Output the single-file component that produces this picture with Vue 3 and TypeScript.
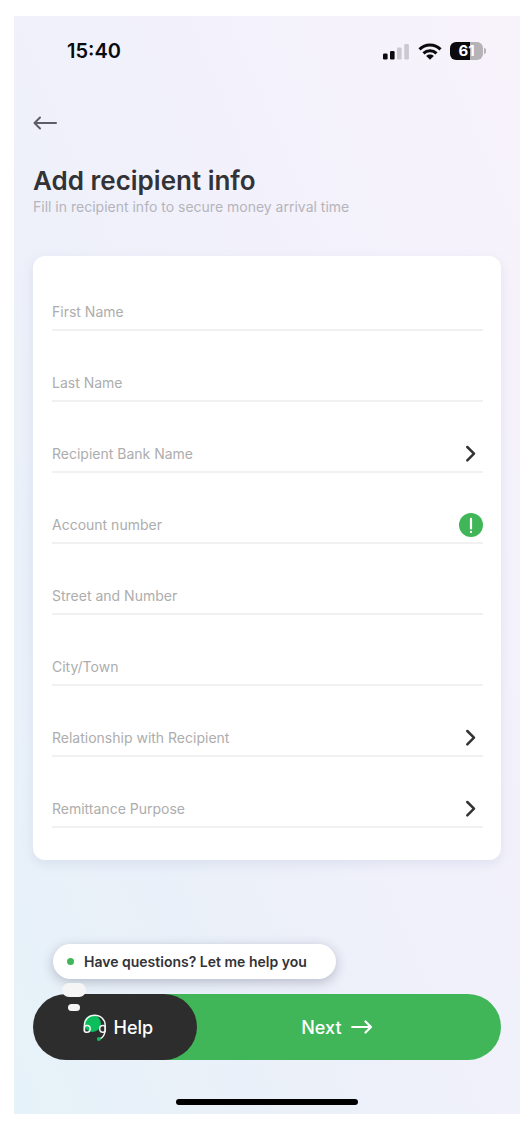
<script setup lang="ts">
import { reactive } from 'vue'

interface Field {
  id: string
  label: string
  kind: 'text' | 'select'
  info?: boolean
}

const fields: Field[] = [
  { id: 'firstName', label: 'First Name', kind: 'text' },
  { id: 'lastName', label: 'Last Name', kind: 'text' },
  { id: 'bank', label: 'Recipient Bank Name', kind: 'select' },
  { id: 'account', label: 'Account number', kind: 'text', info: true },
  { id: 'street', label: 'Street and Number', kind: 'text' },
  { id: 'city', label: 'City/Town', kind: 'text' },
  { id: 'relationship', label: 'Relationship with Recipient', kind: 'select' },
  { id: 'purpose', label: 'Remittance Purpose', kind: 'select' },
]

const values = reactive<Record<string, string>>(
  Object.fromEntries(fields.map((f) => [f.id, ''])),
)
</script>

<template>
  <main class="screen">
    <div class="status">
      <span class="time">15:40</span>
      <div class="status-icons">
        <svg class="signal" viewBox="0 0 27 17" aria-hidden="true">
          <rect x="0" y="10.500" width="4.600" height="6" rx="1.300" fill="#0b0a0d" />
          <rect x="7" y="8" width="4.600" height="8.500" rx="1.300" fill="#0b0a0d" />
          <rect x="14" y="4.500" width="4.600" height="12" rx="1.300" fill="#ccc8d0" />
          <rect x="21.300" y="1" width="4.600" height="15.500" rx="1.300" fill="#ccc8d0" />
        </svg>
        <svg class="wifi" viewBox="0 0 24 17" aria-hidden="true">
          <g fill="none" stroke="#0b0a0d" stroke-width="3">
            <path d="M1.500 6.400C7.300.5 16.700.5 22.500 6.400" />
            <path d="M5.500 10.300c3.600-3.500 9.400-3.500 13 0" />
          </g>
          <path d="M8.200 12.900c2.200-1.900 5.400-1.900 7.600 0L12 16.700z" fill="#0b0a0d" />
        </svg>
        <div class="battery">
          <span class="cell">61</span>
          <span class="cap"></span>
        </div>
      </div>
    </div>

    <button class="back" type="button" aria-label="Back">
      <svg viewBox="0 0 24 14" aria-hidden="true">
        <path d="M23 7H2M7 1.500 1.500 7 7 12.500" fill="none" stroke="#5c5d69" stroke-width="2" stroke-linecap="round" stroke-linejoin="round" />
      </svg>
    </button>

    <h1>Add recipient info</h1>
    <p class="sub">Fill in recipient info to secure money arrival time</p>

    <form class="card" @submit.prevent>
      <div v-for="f in fields" :key="f.id" class="row">
        <input v-if="f.kind === 'text'" :id="f.id" v-model="values[f.id]" type="text" :placeholder="f.label" :aria-label="f.label" />
        <select v-else :id="f.id" v-model="values[f.id]" :aria-label="f.label">
          <option value="">{{ f.label }}</option>
        </select>
        <svg v-if="f.kind === 'select'" class="chevron" viewBox="0 0 24 24" aria-hidden="true">
          <path d="m8.300 5 6.700 6.700-6.700 6.700" fill="none" stroke="#333" stroke-width="2.500" stroke-linecap="round" stroke-linejoin="round" />
        </svg>
        <button v-if="f.info" class="info" type="button" aria-label="Account number details">
          <svg viewBox="0 0 24 24" aria-hidden="true">
            <circle cx="12" cy="12" r="12" fill="#40b658" />
            <path d="M12 5.800v9.700M12 18.900v.2" stroke="#fff" stroke-width="2.200" stroke-linecap="round" />
          </svg>
        </button>
      </div>
    </form>

    <div class="footer">
      <div class="bubble">
        <span class="dot"></span>Have questions? Let me help you
        <span class="puff large"></span>
        <span class="puff small"></span>
      </div>
      <div class="actions">
        <button class="help" type="button">
          <svg class="headset" viewBox="0 0 24 27" aria-hidden="true">
            <circle cx="9.500" cy="9.500" r="8.500" fill="#0abf5b" />
            <g fill="none" stroke="#f2f5f3" stroke-width="1.500" stroke-linecap="round">
              <path d="M1.400 17V11.500C1.400 5.300 6 1.200 11.700 1.200S22.200 5.300 22.200 11.500V17" />
              <path d="M1.400 13.500c0-1.400 1-2 2.600-2 2 0 3.200 1.300 3.200 3.300s-1.300 3.500-3.200 3.500c-1.700 0-2.600-.5-2.600-1.800z" />
              <path d="M22.200 13.500c0-1.400-1-2-2.300-2-2 0-3.200 1.300-3.200 3.300s1.200 3.500 3.200 3.500c1.500 0 2.300-.5 2.300-1.800z" />
              <path d="M21.900 17.500c-.4 3.600-2 5.900-4.600 7.200" />
            </g>
            <circle cx="15.800" cy="25" r="1.900" fill="#0abf5b" />
          </svg>
          Help
        </button>
        <button class="next" type="button">
          Next
          <svg viewBox="0 0 22 14" aria-hidden="true">
            <path d="M1.200 7H20M14.500 1.500 20 7l-5.500 5.500" fill="none" stroke="#fff" stroke-width="2.200" stroke-linecap="round" stroke-linejoin="round" />
          </svg>
        </button>
      </div>
    </div>
    <div class="home"></div>
  </main>
</template>

<style>
body {
  margin: 0;
  background: #fff;
}
</style>

<style scoped>
.screen {
  box-sizing: border-box;
  display: flex;
  flex-direction: column;
  min-height: calc(100vh - 26px);
  margin: 16px 10px 10px 14px;
  padding: 23px 19px 9px;
  font-family: Inter, "Liberation Sans", sans-serif;
  color: #333337;
  background: linear-gradient(67deg, #e6f2f9 0%, #ebf0f9 30%, #f1f1fb 55%, #f8f3fb 100%);
}

button,
input,
select {
  font-family: inherit;
  border: 0;
  padding: 0;
  background: none;
}

svg {
  display: block;
  flex: none;
}

.status {
  display: flex;
  align-items: center;
  justify-content: space-between;
  height: 24px;
  padding: 0 15px 0 34px;
}

.time {
  font-size: 20px;
  font-weight: 600;
  line-height: 24px;
  color: #0b0a0d;
}

.status-icons {
  display: flex;
  align-items: center;
  gap: 8px;
}

.signal {
  width: 27px;
  height: 17px;
}

.wifi {
  width: 24px;
  height: 17px;
}

.battery {
  display: flex;
  align-items: center;
  gap: 1px;
}

.cell {
  width: 33px;
  height: 18px;
  border-radius: 6px;
  font-size: 15px;
  font-weight: 700;
  line-height: 18px;
  text-align: center;
  color: #fff;
  background: linear-gradient(90deg, #0b0a0d 61%, #b5b2b8 61%);
}

.cap {
  width: 2px;
  height: 6px;
  border-radius: 0 2px 2px 0;
  background: #b5b2b8;
}

.back {
  align-self: flex-start;
  margin-top: 53px;
  cursor: pointer;
}

.back svg {
  width: 24px;
  height: 14px;
}

h1 {
  margin: 34px 0 0;
  font-size: 26px;
  font-weight: 600;
  line-height: 34px;
}

.sub {
  margin: 0;
  font-size: 14px;
  line-height: 18px;
  color: #b5b4bc;
}

.card {
  margin-top: 40px;
  padding: 4px 18px 32px 19px;
  border-radius: 12px;
  background: #fff;
  box-shadow: 0 4px 12px rgba(110, 130, 170, 0.14);
}

.row {
  box-sizing: border-box;
  display: flex;
  align-items: flex-end;
  height: 71px;
  padding-bottom: 5px;
  border-bottom: 2px solid #f1f1f2;
}

.row input,
.row select {
  flex: 1;
  min-width: 0;
  height: 24px;
  font-size: 14px;
  line-height: 24px;
  color: #adadad;
  appearance: none;
  outline: none;
}

.row input::placeholder {
  color: #adadad;
  opacity: 1;
}

.chevron,
.info svg {
  width: 24px;
  height: 24px;
}

.footer {
  margin-top: auto;
}

.bubble {
  position: relative;
  z-index: 2;
  display: flex;
  align-items: center;
  width: fit-content;
  height: 35px;
  margin: 0 0 15px 20px;
  padding: 0 29px 0 14px;
  border-radius: 18px;
  font-size: 14px;
  font-weight: 600;
  white-space: nowrap;
  background: #fff;
  box-shadow: 0 3px 12px rgba(60, 60, 90, 0.3);
}

.dot {
  width: 7px;
  height: 7px;
  margin-right: 10px;
  border-radius: 50%;
  background: #40b658;
}

.puff {
  position: absolute;
  background: #f5f5f5;
}

.large {
  top: 39px;
  left: 9px;
  width: 24px;
  height: 14px;
  border-radius: 7px;
}

.small {
  top: 60px;
  left: 15px;
  width: 12px;
  height: 7px;
  border-radius: 4px;
}

.actions {
  display: flex;
}

.actions button {
  display: flex;
  align-items: center;
  justify-content: center;
  height: 66px;
  font-size: 18px;
  font-weight: 500;
  color: #fff;
  cursor: pointer;
}

.actions .help {
  position: relative;
  z-index: 1;
  flex: 0 0 35%;
  gap: 7px;
  padding-left: 6px;
  border-radius: 33px;
  background: #2d2d2d;
}

.headset {
  width: 24px;
  height: 27px;
}

.actions .next {
  flex: 1;
  gap: 9px;
  margin-left: -33px;
  padding-left: 9px;
  border-radius: 0 33px 33px 0;
  background: #40b658;
}

.next svg {
  width: 22px;
  height: 14px;
}

.home {
  align-self: center;
  width: 182px;
  height: 6px;
  margin-top: 39px;
  border-radius: 3px;
  background: #000;
}
</style>
